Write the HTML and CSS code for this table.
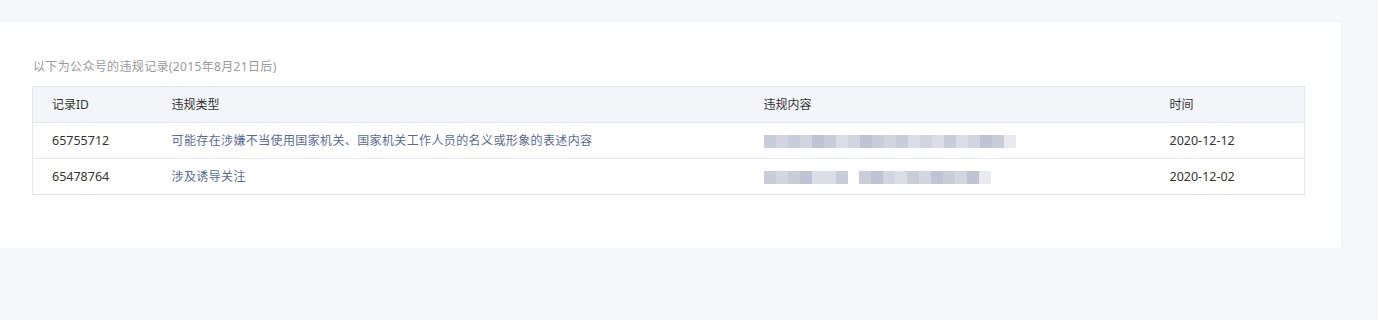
FILE: index.html
```html
<!DOCTYPE html>
<html lang="zh-CN">
<head>
<meta charset="utf-8">
<title>违规记录</title>
<link rel="stylesheet" href="styles.css">
</head>
<body>
<div class="card">
  <p class="caption">以下为公众号的违规记录(2015年8月21日后)</p>
  <table class="records">
    <colgroup>
      <col class="c-id"><col class="c-type"><col class="c-content"><col class="c-time">
    </colgroup>
    <thead>
      <tr><th>记录ID</th><th>违规类型</th><th>违规内容</th><th>时间</th></tr>
    </thead>
    <tbody>
      <tr>
        <td class="num">65755712</td>
        <td class="type">可能存在涉嫌不当使用国家机关、国家机关工作人员的名义或形象的表述内容</td>
        <td><div class="mosaic">
          <i class="m2"></i><i class="m1"></i><i class="m2"></i><i class="m1"></i><i class="m3"></i><i class="m2"></i><i class="m4"></i><i class="m1"></i><i class="m3"></i><i class="m2"></i><i class="m1"></i><i class="m2"></i><i class="m4"></i><i class="m1"></i><i class="m4"></i><i class="m2"></i><i class="m4"></i><i class="m1"></i><i class="m3"></i><i class="m2"></i><i class="m5"></i>
        </div></td>
        <td class="num">2020-12-12</td>
      </tr>
      <tr>
        <td class="num">65478764</td>
        <td class="type">涉及诱导关注</td>
        <td><div class="mosaic">
          <i class="m2"></i><i class="m1"></i><i class="m2"></i><i class="m3"></i><i class="m4"></i><i class="m4"></i><i class="m2"></i><span class="gap"></span><i class="m2"></i><i class="m3"></i><i class="m1"></i><i class="m4"></i><i class="m2"></i><i class="m1"></i><i class="m3"></i><i class="m2"></i><i class="m1"></i><i class="m3"></i><i class="m5"></i>
        </div></td>
        <td class="num">2020-12-02</td>
      </tr>
    </tbody>
  </table>
</div>
</body>
</html>
```

FILE: styles.css
```css
html, body {
  margin: 0;
  padding: 0;
  background: #f5f6f8;
}
body {
  font-family: "Noto Sans", "Noto Sans CJK SC", sans-serif;
  font-size: 12px;
  color: #353535;
  padding-top: 22px;
}
.card {
  width: 1341px;
  height: 226px;
  box-sizing: border-box;
  background: #fff;
  border-radius: 0 2px 2px 0;
  padding: 36px 36px 0 32px;
  box-shadow: 0 1px 2px rgba(0,0,0,0.03);
}
.caption {
  margin: 0 0 10px 1px;
  color: #9a9a9a;
  font-size: 12px;
  line-height: 18px;
  letter-spacing: 0.35px;
}
.records {
  width: 1272px;
  border-collapse: collapse;
  table-layout: fixed;
  border: 1px solid #e7e7eb;
}
.c-id { width: 120px; }
.c-type { width: 592px; }
.c-content { width: 406px; }
.c-time { width: 154px; }
.records th, .records td {
  height: 35px;
  padding: 0 0 0 19px;
  text-align: left;
  font-weight: normal;
  line-height: 18px;
  white-space: nowrap;
  border-bottom: 1px solid #e7e7eb;
  vertical-align: middle;
}
.records th {
  background: #f4f5f9;
  color: #353535;
  font-size: 12px;
}
.records td.num {
  font-size: 12.5px;
  color: #353535;
}
.records td.type {
  color: #576b95;
  letter-spacing: 0.38px;
}
.mosaic {
  display: flex;
  height: 13px;
  margin-top: 2px;
}
.mosaic i {
  display: block;
  width: 12px;
  height: 13px;
}
.mosaic .gap { width: 11px; }
.m1 { background: #d3d6e0; }
.m2 { background: #c9ccd9; }
.m3 { background: #bfc3d3; }
.m4 { background: #dcdee7; }
.m5 { background: #e8eaf0; }
```
